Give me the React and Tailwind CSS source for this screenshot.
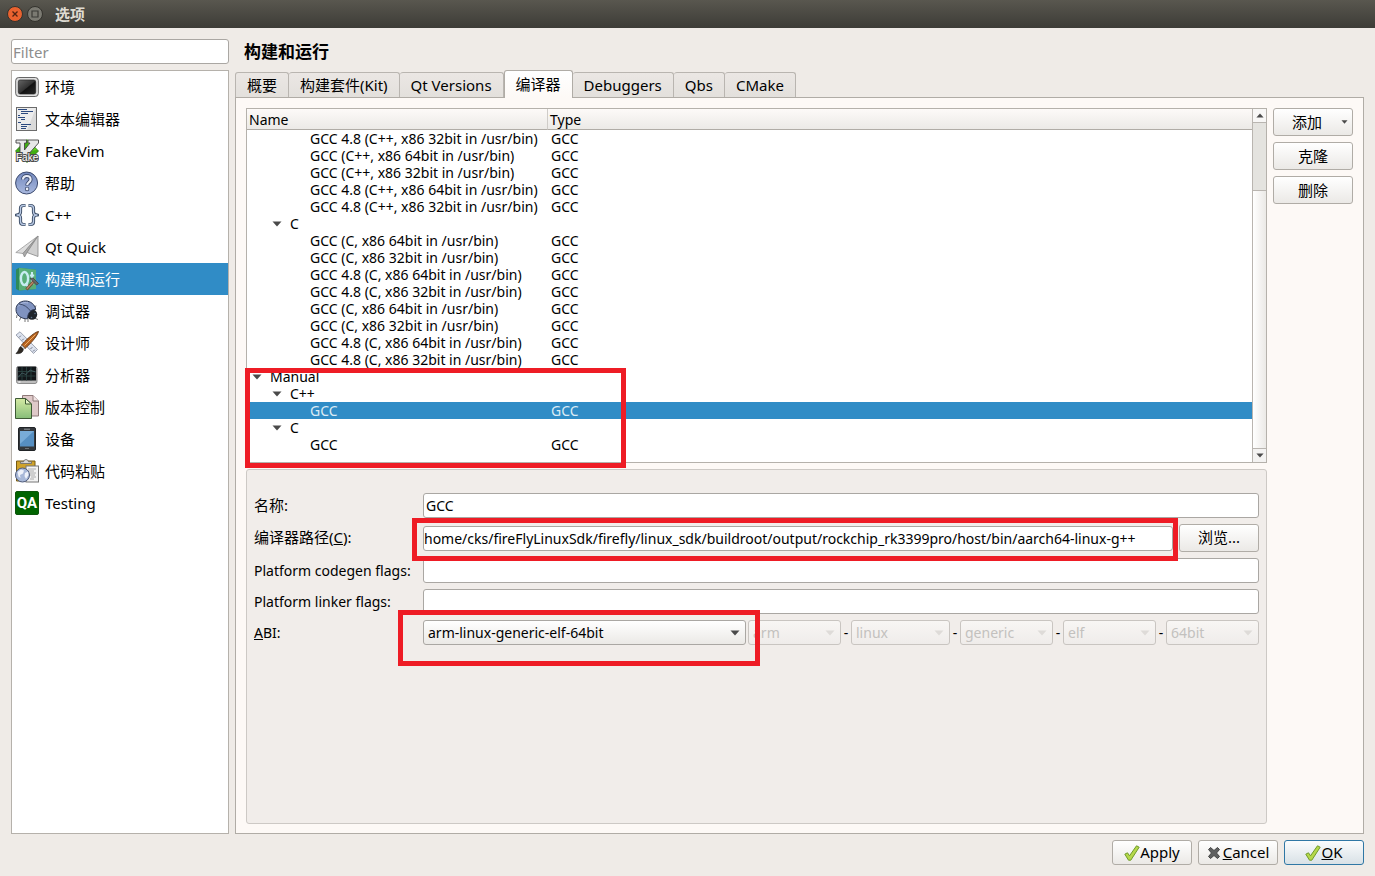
import React, { useState } from "react";

const RED_BOX = "absolute z-20 border-[5px] border-[#ee1c25] pointer-events-none";

const INPUT =
  "h-[25px] w-full min-w-0 rounded-[3px] border border-[#aaa7a3] bg-white text-black outline-none";

const BUTTON =
  "flex items-center justify-center rounded-[3px] border border-[#b0aca6] bg-linear-to-b from-white to-[#ebe9e6] text-black";

/* ---------- sidebar icons, all on a 24x24 grid ---------- */

const EnvironmentIcon = () => (
  <svg width="24" height="24" viewBox="0 0 24 24">
    <defs>
      <linearGradient id="screen" x1="0" y1="0" x2="1" y2="1">
        <stop offset="0" stopColor="#666" />
        <stop offset="0.5" stopColor="#333" />
        <stop offset="0.55" stopColor="#111" />
        <stop offset="1" stopColor="#2a2a2a" />
      </linearGradient>
    </defs>
    <rect x="0.7" y="2.5" width="22.6" height="19" rx="3" fill="#c4c4c4" stroke="#666" />
    <rect x="2" y="3.8" width="20" height="16.4" rx="2" fill="none" stroke="#eee" />
    <rect x="3.3" y="5" width="17.4" height="14" rx="2" fill="url(#screen)" stroke="#222" strokeWidth="0.6" />
  </svg>
);

const TextEditorIcon = () => (
  <svg width="24" height="24" viewBox="0 0 24 24">
    <rect x="1.5" y="0.5" width="20" height="23" fill="#ececec" stroke="#6b6b6b" />
    <path d="M21 1v22H12z" fill="#dadada" />
    <path
      d="M3 2.5h9M6 4.5h12M6 6.5h7M3 8.5h2M3 10.5h7M6 12.5h4M3 15.5h3M6 17.5h10M6 19.5h6M6 21.5h5"
      stroke="#2c4a80"
    />
  </svg>
);

const FakeVimIcon = () => (
  <svg width="24" height="24" viewBox="0 0 24 24">
    <path d="M12 0.5 23.5 12 12 23.5 0.5 12z" fill="#3fae12" stroke="#27700c" strokeWidth="0.8" />
    <path d="M12 1 22 11l-7 1z" fill="#61d21e" />
    <path
      d="M1 1h10.500v3H9.500v7L15 4h-2V1h10.500v3L11 18H5V4H1z"
      fill="#e7e7e7"
      stroke="#444"
      strokeWidth="0.9"
      strokeLinejoin="round"
    />
    <text x="1" y="21.500" fontFamily="Liberation Sans" fontSize="10" fill="#fff" stroke="#4a4a4a" strokeWidth="2" paintOrder="stroke">
      Fake
    </text>
  </svg>
);

const HelpIcon = () => (
  <svg width="24" height="24" viewBox="0 0 24 24">
    <defs>
      <linearGradient id="help" x1="0" y1="0" x2="0" y2="1">
        <stop offset="0" stopColor="#7288bd" />
        <stop offset="1" stopColor="#a9b9df" />
      </linearGradient>
    </defs>
    <circle cx="11.6" cy="12" r="11" fill="url(#help)" stroke="#3d4b6e" />
    <path
      d="M8 8.6c0-2.4 1.6-3.6 3.8-3.6s3.8 1.3 3.8 3.4c0 2.8-3.4 2.9-3.4 6"
      fill="none"
      stroke="#3d4b6e"
      strokeWidth="4"
    />
    <circle cx="12.1" cy="18" r="2.2" fill="#3d4b6e" />
    <path
      d="M8 8.6c0-2.4 1.6-3.6 3.8-3.6s3.8 1.3 3.8 3.4c0 2.8-3.4 2.9-3.4 5.7"
      fill="none"
      stroke="#e8ecf6"
      strokeWidth="2.2"
    />
    <circle cx="12.1" cy="18" r="1.4" fill="#e8ecf6" />
  </svg>
);

const BracesIcon = () => (
  <svg width="24" height="24" viewBox="0 0 24 24" fill="none" strokeLinejoin="round">
    <g stroke="#3f5069" strokeWidth="3.2">
      <path d="M10.500 2.500H8.500Q5.500 2.500 5.500 5.500V9Q5.500 12 1.500 12Q5.500 12 5.500 15V18.500Q5.500 21.500 8.500 21.500H10.500" />
      <path d="M13.500 2.500H15.500Q18.500 2.500 18.500 5.500V9Q18.500 12 22.500 12Q18.500 12 18.500 15V18.500Q18.500 21.500 15.500 21.500H13.500" />
    </g>
    <g stroke="#b9c9e4" strokeWidth="1.3">
      <path d="M10.200 2.500H8.500Q5.500 2.500 5.500 5.500V9Q5.500 12 2 12Q5.500 12 5.500 15V18.500Q5.500 21.500 8.500 21.500H10.200" />
      <path d="M13.800 2.500H15.500Q18.500 2.500 18.500 5.500V9Q18.500 12 22 12Q18.500 12 18.500 15V18.500Q18.500 21.500 15.500 21.500H13.800" />
    </g>
  </svg>
);

const PaperPlaneIcon = () => (
  <svg width="24" height="24" viewBox="0 0 24 24" strokeLinejoin="round">
    <path d="M23 1 .8 17.500 8 18.500z" fill="#ddd" stroke="#999" strokeWidth="0.8" />
    <path d="M23 1 8 18.500 9.500 22 12 17.500z" fill="#aaa" stroke="#888" strokeWidth="0.8" />
    <path d="M23 1 12 17.500 23 21.500z" fill="#d0d0d0" stroke="#888" strokeWidth="0.8" />
  </svg>
);

const BuildIcon = () => (
  <svg width="24" height="24" viewBox="0 0 24 24">
    <path d="M1 2.500 4 .8l17 2V22L4 23.500 1 22z" fill="#2f8a58" />
    <path d="M4 .8 21 2.800V22L4 23.500z" fill="#58ae79" />
    <ellipse cx="9.500" cy="11.500" rx="3.600" ry="6.500" fill="none" stroke="#c8ecf2" strokeWidth="2.400" />
    <path d="M10.500 16l3 4.500M17 5v10q0 1.500 2 1.200M14.800 8.500h4.400" fill="none" stroke="#c8ecf2" strokeWidth="2" />
    <path d="M11.500 22.500 19 14" stroke="#6f4c35" strokeWidth="3" />
    <path d="M11.800 22 19 14" stroke="#b98b68" strokeWidth="1.200" />
    <path d="M15 11.500 18 11l5.500 5.500-2 1.500-3.500-3.500z" fill="#666" stroke="#3c3c3c" strokeWidth="0.7" />
  </svg>
);

const BugIcon = () => (
  <svg width="24" height="24" viewBox="0 0 24 24">
    <path d="M2 16l-.5 3M6 18l-1.500 3.500M10 19.500V23M13 20v3M19 19l4 1.500M20 9l1-2.500" fill="none" stroke="#777" />
    <circle cx="17" cy="15.500" r="5.200" fill="#20252c" />
    <path d="M12.500 19.800C6 20 1 16 1 10.500 1 5.500 5 2 10.500 2c5 0 9.500 3.500 10.200 8.500-5-.5-8 3.500-8.200 9.300z" fill="#8093c0" stroke="#2c3752" />
    <path d="M3 7.500C6 4 9 3 13 4" fill="none" stroke="#b3bfdf" />
    <path d="M4 5c5 .5 8.500 3 11.500 7" fill="none" stroke="#2c3752" strokeWidth="0.8" />
    <circle cx="16.500" cy="18.500" r="0.8" fill="#57708a" />
    <circle cx="20" cy="14.500" r="0.8" fill="#57708a" />
  </svg>
);

const DesignerIcon = () => (
  <svg width="24" height="24" viewBox="0 0 24 24" strokeLinejoin="round">
    <path d="M1 4 5 .8 22.500 18.500 18.500 22.500z" fill="#dde3ef" stroke="#8990a0" strokeWidth="0.8" />
    <path d="M4 6.500l1.800-1.800M7 9.500l1.800-1.800M15.500 18l1.800-1.800M18 20.500l1.800-1.800" stroke="#6e7687" />
    <path d="M23.500.5C19 1 9 11 6.500 14l3.500 3.500C14.500 13.500 22 6 23.500.5z" fill="#b8641f" stroke="#5b300f" strokeWidth="0.9" />
    <path d="M20.500 3.500 9.500 14.500" stroke="#eeb06c" />
    <path d="M7 14.200l2.700 2.700-1.400 1.400-2.800-2.700z" fill="#cfcfcf" stroke="#555" strokeWidth="0.6" />
    <path d="M5.500 15.800c-2 1-1.500 4.500-4.500 6.700 3.500.5 7-.5 7.200-4.200z" fill="#302a22" stroke="#151515" strokeWidth="0.7" />
  </svg>
);

const AnalyzerIcon = () => (
  <svg width="24" height="24" viewBox="0 0 24 24">
    <rect x="1.500" y="3.500" width="20.500" height="17" rx="2" fill="#bdbdbd" stroke="#777" strokeWidth="0.8" />
    <rect x="2.500" y="3.800" width="18.500" height="13.700" fill="#121619" />
    <path d="M3 8.500h17.500M3 13h17.500M7 4v13.500M11.500 4v13.500M16 4v13.500" stroke="#2c4644" strokeWidth="0.8" />
    <path d="M3 14.500 7 10l4 1.500L15 7l5.500 2" fill="none" stroke="#4c6b6e" strokeWidth="0.7" />
    <path d="M3.500 19h2" stroke="#fff" />
  </svg>
);

const VersionControlIcon = () => (
  <svg width="24" height="24" viewBox="0 0 24 24">
    <defs>
      <linearGradient id="page" x1="0" y1="0" x2="0" y2="1">
        <stop offset="0" stopColor="#d5eaa4" />
        <stop offset="1" stopColor="#86bd78" />
      </linearGradient>
    </defs>
    <path d="M7.500.5H18L23.500 6v15h-16z" fill="#dfc9c9" stroke="#8f7a7a" />
    <path d="M18 .5V6h5.500" fill="#f3e6e6" stroke="#8f7a7a" />
    <path d="M.5 3.500h10L16.500 9v14.500H.5z" fill="url(#page)" stroke="#3e5a35" />
    <path d="M10.500 3.500V9h6z" fill="#e3f4c4" stroke="#3e5a35" />
  </svg>
);

const DeviceIcon = () => (
  <svg width="24" height="24" viewBox="0 0 24 24">
    <rect x="3.500" y="0.500" width="17" height="23" rx="1.500" fill="#34383c" stroke="#202326" />
    <rect x="5" y="4" width="14" height="15.500" fill="#568fc2" />
    <path d="M5 4h14L5 17z" fill="#78acd8" />
    <path d="M9 2.200h6" stroke="#90959a" />
    <path d="M10 21.500h4" stroke="#6d7276" />
  </svg>
);

const PasteIcon = () => (
  <svg width="24" height="24" viewBox="0 0 24 24">
    <path d="M1.500 2h18.500v20h-18.500z" fill="#d0a32a" stroke="#765a12" />
    <path d="M5.500 4.500V2.800h3Q9 .5 11 .5t2.500 2.300h3v1.700z" fill="#d9d9d9" stroke="#666" strokeWidth="0.8" />
    <rect x="11" y="7" width="12.500" height="16" fill="#f3f3f3" stroke="#777" />
    <path d="M13 10h8M13 12h6M15 14h6M15 16h5M16 18h5M15 20h4" stroke="#999" strokeWidth="0.8" />
    <circle cx="7.500" cy="16" r="7" fill="#a8b8d8" stroke="#4f5c7c" />
    <path d="M2.500 13 6 10.500l3 1-1 3-3 1.500.5 3-2-1.500zM10 14l3-1.500.5 3.500-2.500 4-1.500-3z" fill="#eef2fa" />
  </svg>
);

const TestingIcon = () => (
  <svg width="24" height="24" viewBox="0 0 24 24">
    <rect x="0.500" y="0.500" width="23" height="23" rx="1.500" fill="#006400" stroke="#0c550c" />
    <text x="12" y="17" textAnchor="middle" fontFamily="Roboto" fontSize="15" fontWeight="bold" fill="#fff">
      QA
    </text>
  </svg>
);

/* ---------- small glyphs ---------- */

const ArrowDown = ({ className = "" }) => (
  <svg className={className} width="10" height="6" viewBox="0 0 10 6">
    <path d="M.5.5h9L5 5.500z" fill="currentColor" />
  </svg>
);

const CheckIcon = () => (
  <svg width="16" height="16" viewBox="0 0 16 16">
    <path
      d="M.8 9.200 3.500 7.800l2 3L12.500.8l2.700 1.400L6.800 15.200H4.500z"
      fill="#b5d84a"
      stroke="#6f9a2c"
      strokeLinejoin="round"
    />
  </svg>
);

const CrossIcon = () => (
  <svg width="14" height="14" viewBox="0 0 14 14">
    <path
      d="M3.500 1.500 7 4.500l3.500-3 2 2L9.500 7l3 3.500-2 2L7 9.500l-3.500 3-2-2L4.500 7l-3-3.500z"
      fill="#5f6060"
      stroke="#434444"
      strokeLinejoin="round"
    />
  </svg>
);

const categories = [
  { name: "环境", Icon: EnvironmentIcon },
  { name: "文本编辑器", Icon: TextEditorIcon },
  { name: "FakeVim", Icon: FakeVimIcon },
  { name: "帮助", Icon: HelpIcon },
  { name: "C++", Icon: BracesIcon },
  { name: "Qt Quick", Icon: PaperPlaneIcon },
  { name: "构建和运行", Icon: BuildIcon },
  { name: "调试器", Icon: BugIcon },
  { name: "设计师", Icon: DesignerIcon },
  { name: "分析器", Icon: AnalyzerIcon },
  { name: "版本控制", Icon: VersionControlIcon },
  { name: "设备", Icon: DeviceIcon },
  { name: "代码粘贴", Icon: PasteIcon },
  { name: "Testing", Icon: TestingIcon },
];

const tabs = ["概要", "构建套件(Kit)", "Qt Versions", "编译器", "Debuggers", "Qbs", "CMake"];

const compilers = [
  { level: 2, name: "GCC 4.8 (C++, x86 32bit in /usr/bin)", type: "GCC" },
  { level: 2, name: "GCC (C++, x86 64bit in /usr/bin)", type: "GCC" },
  { level: 2, name: "GCC (C++, x86 32bit in /usr/bin)", type: "GCC" },
  { level: 2, name: "GCC 4.8 (C++, x86 64bit in /usr/bin)", type: "GCC" },
  { level: 2, name: "GCC 4.8 (C++, x86 32bit in /usr/bin)", type: "GCC" },
  { level: 1, name: "C" },
  { level: 2, name: "GCC (C, x86 64bit in /usr/bin)", type: "GCC" },
  { level: 2, name: "GCC (C, x86 32bit in /usr/bin)", type: "GCC" },
  { level: 2, name: "GCC 4.8 (C, x86 64bit in /usr/bin)", type: "GCC" },
  { level: 2, name: "GCC 4.8 (C, x86 32bit in /usr/bin)", type: "GCC" },
  { level: 2, name: "GCC (C, x86 64bit in /usr/bin)", type: "GCC" },
  { level: 2, name: "GCC (C, x86 32bit in /usr/bin)", type: "GCC" },
  { level: 2, name: "GCC 4.8 (C, x86 64bit in /usr/bin)", type: "GCC" },
  { level: 2, name: "GCC 4.8 (C, x86 32bit in /usr/bin)", type: "GCC" },
  { level: 0, name: "Manual" },
  { level: 1, name: "C++" },
  { level: 2, name: "GCC", type: "GCC" },
  { level: 1, name: "C" },
  { level: 2, name: "GCC", type: "GCC" },
];

const indent = ["pl-[5px]", "pl-[25px]", "pl-[63px]"];

const abiParts = [
  { value: "arm", width: "w-[93px]" },
  { value: "linux", width: "w-[99px]" },
  { value: "generic", width: "w-[93px]" },
  { value: "elf", width: "w-[93px]" },
  { value: "64bit", width: "w-[93px]" },
];

const Sidebar = ({ current, onSelect }) => (
  <div className="flex w-[218px] shrink-0 flex-col gap-1.5">
    <input
      type="text"
      placeholder="Filter"
      aria-label="Filter"
      className={`${INPUT} px-px text-[15px] placeholder:text-[#8d8d8d]`}
    />
    <ul className="flex-1 border border-[#b5b1ab] bg-white">
      {categories.map(({ name, Icon }) => (
        <li key={name}>
          <button
            onClick={() => onSelect(name)}
            className={`flex h-8 w-full items-center gap-1.5 pl-[3px] text-left ${
              current === name ? "bg-[#308cc6] text-white" : "text-black"
            }`}
          >
            <Icon />
            <span className="pt-[2px] text-[15px]">{name}</span>
          </button>
        </li>
      ))}
    </ul>
  </div>
);

const ScrollBar = () => (
  <div className="flex w-[14px] shrink-0 flex-col border-l border-[#b9b5b0]">
    <div className="flex h-[14px] items-center justify-center border-b border-[#b9b5b0] bg-[#f8f7f6] text-[#4a4a4a]">
      <ArrowDown className="h-[5px] w-2 rotate-180" />
    </div>
    <div className="h-[67px] bg-[#e4e3df]" />
    <div className="flex-1 border-y border-[#b9b5b0] bg-linear-to-r from-white to-[#ebe9e6]" />
    <div className="flex h-[13px] items-center justify-center bg-[#f4f3f2] text-[#4a4a4a]">
      <ArrowDown className="h-[5px] w-2" />
    </div>
  </div>
);

const CompilerTable = () => {
  const [selected, setSelected] = useState(16);

  return (
    <div className="relative flex border border-[#b5b1ab] bg-white">
      <div className="min-w-0 flex-1 pb-[9px]">
        <table className="w-full table-fixed border-separate border-spacing-0 text-sm">
          <thead>
            <tr className="h-[21px] bg-linear-to-b from-[#fdfaf8] to-[#ebe9e6] text-left leading-[18px]">
              <th className="w-[301px] border-r border-b border-r-[#cfccc8] border-b-[#b0aca6] p-0 pt-[2px] pl-[2px] font-normal">
                Name
              </th>
              <th className="border-b border-b-[#b0aca6] p-0 pt-[2px] pl-[2px] font-normal">Type</th>
            </tr>
          </thead>
          <tbody>
            {compilers.map((row, index) => (
              <tr
                key={index}
                onClick={() => setSelected(index)}
                className={`h-[17px] leading-[17px] ${
                  index === selected ? "bg-[#308cc6] text-[#dcebf5]" : "text-black"
                }`}
              >
                <td className={`p-0 whitespace-nowrap ${indent[row.level]}`}>
                  <div className="flex items-center gap-2">
                    {!row.type && <ArrowDown className="text-[#4a4a4a]" />}
                    {row.name}
                  </div>
                </td>
                <td className="p-0 pl-[3px]">{row.type}</td>
              </tr>
            ))}
          </tbody>
        </table>
      </div>
      <ScrollBar />
      <div className={`${RED_BOX} top-[259px] -left-[2px] h-[100px] w-[381px]`} />
    </div>
  );
};

const CompilerForm = () => (
  <div className="grid flex-1 grid-cols-[169px_minmax(0,1fr)] content-start items-center gap-y-1.5 rounded-[3px] border border-[#cdc9c5] bg-[#f1edea] px-[7px] pt-[23px] text-sm">
    <label htmlFor="name" className="text-[15px]">
      名称:
    </label>
    <input id="name" type="text" defaultValue="GCC" className={`${INPUT} px-[2px]`} />

    <label htmlFor="path" className="text-[15px]">
      编译器路径(<u>C</u>):
    </label>
    <div className="flex items-center gap-1.5">
      <div className="relative flex min-w-0 flex-1">
        <input
          id="path"
          type="text"
          defaultValue="home/cks/fireFlyLinuxSdk/firefly/linux_sdk/buildroot/output/rockchip_rk3399pro/host/bin/aarch64-linux-g++"
          className={INPUT}
        />
        <div className={`${RED_BOX} -top-[8px] -right-[5px] -bottom-[10px] -left-[11px]`} />
      </div>
      <button className={`${BUTTON} h-7 w-20 text-[15px]`}>浏览...</button>
    </div>

    <label htmlFor="codegen">Platform codegen flags:</label>
    <input id="codegen" type="text" className={`${INPUT} px-[2px]`} />

    <label htmlFor="linker">Platform linker flags:</label>
    <input id="linker" type="text" className={`${INPUT} px-[2px]`} />

    <label htmlFor="abi">
      <u>A</u>BI:
    </label>
    <div className="flex items-center">
      <div className="relative mr-[2px] min-w-0 flex-1">
        <select
          id="abi"
          className="h-[25px] w-full appearance-none rounded-[3px] border border-[#aaa7a3] bg-linear-to-b from-white to-[#ebe9e6] pl-[4px] text-black"
        >
          <option>arm-linux-generic-elf-64bit</option>
        </select>
        <ArrowDown className="pointer-events-none absolute top-[10px] right-[6px] text-[#4a4a4a]" />
        <div className={`${RED_BOX} -top-[10px] -right-[14px] -bottom-[21px] -left-[25px]`} />
      </div>
      {abiParts.map(({ value, width }, index) => (
        <React.Fragment key={value}>
          {index > 0 && <span className="w-[10px] text-center">-</span>}
          <div className={`relative ${width}`}>
            <select
              disabled
              aria-label={value}
              className="h-[25px] w-full appearance-none rounded-[3px] border border-[#c9c5c1] bg-linear-to-b from-[#f8f6f4] to-[#efecea] pl-[4px] text-[#c3c1be] opacity-100"
            >
              <option>{value}</option>
            </select>
            <ArrowDown className="pointer-events-none absolute top-[10px] right-[6px] text-[#dedbd8]" />
          </div>
        </React.Fragment>
      ))}
    </div>
  </div>
);

const App = () => {
  const [category, setCategory] = useState("构建和运行");
  const [tab, setTab] = useState("编译器");

  return (
    <div className="flex min-h-screen flex-col bg-[#efebe7] font-['Noto_Sans','Noto_Sans_CJK_SC',sans-serif] text-sm text-black">
      {/* Window title bar */}
      <header className="flex h-7 items-center gap-1 bg-linear-to-b from-[#59574f] to-[#3d3c37] pl-[7px]">
        <button aria-label="Close">
          <svg width="16" height="16" viewBox="0 0 16 16">
            <circle cx="8" cy="8" r="7.500" fill="#e9622f" stroke="#33322d" />
            <path d="M5.500 5.500l5 5M10.500 5.500l-5 5" stroke="#4f2312" strokeWidth="1.3" />
          </svg>
        </button>
        <button aria-label="Maximize">
          <svg width="16" height="16" viewBox="0 0 16 16">
            <circle cx="8" cy="8" r="7.500" fill="#7b7a72" stroke="#33322d" />
            <path d="M5 5h6v6H5z" fill="none" stroke="#3b3a36" strokeWidth="1.2" />
          </svg>
        </button>
        <span className="pt-[2px] pl-2 text-[15px] font-bold text-[#dfdbd2]">选项</span>
      </header>

      <div className="flex flex-1 gap-1.5 px-[11px] pt-[11px]">
        <Sidebar current={category} onSelect={setCategory} />

        <main className="flex min-w-0 flex-1 flex-col">
          <h1 className="mb-1.5 h-[25px] pl-[9px] text-[17px] leading-[25px] font-bold">{category}</h1>

          <div role="tablist" className="flex h-[27px] items-end text-[15px]">
            {tabs.map((name) => (
              <button
                key={name}
                role="tab"
                aria-selected={tab === name}
                onClick={() => setTab(name)}
                className={
                  tab === name
                    ? "relative z-10 -mb-px h-7 rounded-t-[3px] border border-b-0 border-[#b0aca6] bg-linear-to-b from-white to-[#fdf9f6] px-[11px]"
                    : "h-[25px] rounded-t-[3px] border-t border-r border-[#b9b5b0] bg-linear-to-b from-[#ebe7e4] to-[#e3e0dc] px-[11px] pt-px first:border-l"
                }
              >
                {name}
              </button>
            ))}
          </div>

          <div className="flex flex-1 gap-1.5 border border-[#b0aca6] bg-[#fdf9f6] px-[10px] pt-[10px] pb-[9px]">
            <div className="flex min-w-0 flex-1 flex-col gap-1.5">
              <CompilerTable />
              <CompilerForm />
            </div>
            <div className="flex w-20 shrink-0 flex-col gap-1.5 text-[15px]">
              <button className={`${BUTTON} relative h-7 pt-px pr-3`}>
                添加
                <ArrowDown className="absolute top-[11px] right-[4px] h-1 w-[7px] text-[#4a4a4a]" />
              </button>
              <button className={`${BUTTON} h-7 pt-px`}>克隆</button>
              <button className={`${BUTTON} h-7 pt-px`}>删除</button>
            </div>
          </div>
        </main>
      </div>

      <footer className="flex justify-end gap-1.5 px-[11px] pt-1.5 pb-[11px] text-[15px]">
        <button className={`${BUTTON} h-[25px] w-20`}>
          <CheckIcon />
          Apply
        </button>
        <button className={`${BUTTON} h-[25px] w-20 gap-[2px]`}>
          <CrossIcon />
          <span>
            <u>C</u>ancel
          </span>
        </button>
        <button className="flex h-[25px] w-20 items-center justify-center rounded-[3px] border border-[#2f77a5] bg-linear-to-b from-[#fbfcfd] to-[#d8e1e6]">
          <CheckIcon />
          <span>
            <u>O</u>K
          </span>
        </button>
      </footer>
    </div>
  );
};

export default App;
